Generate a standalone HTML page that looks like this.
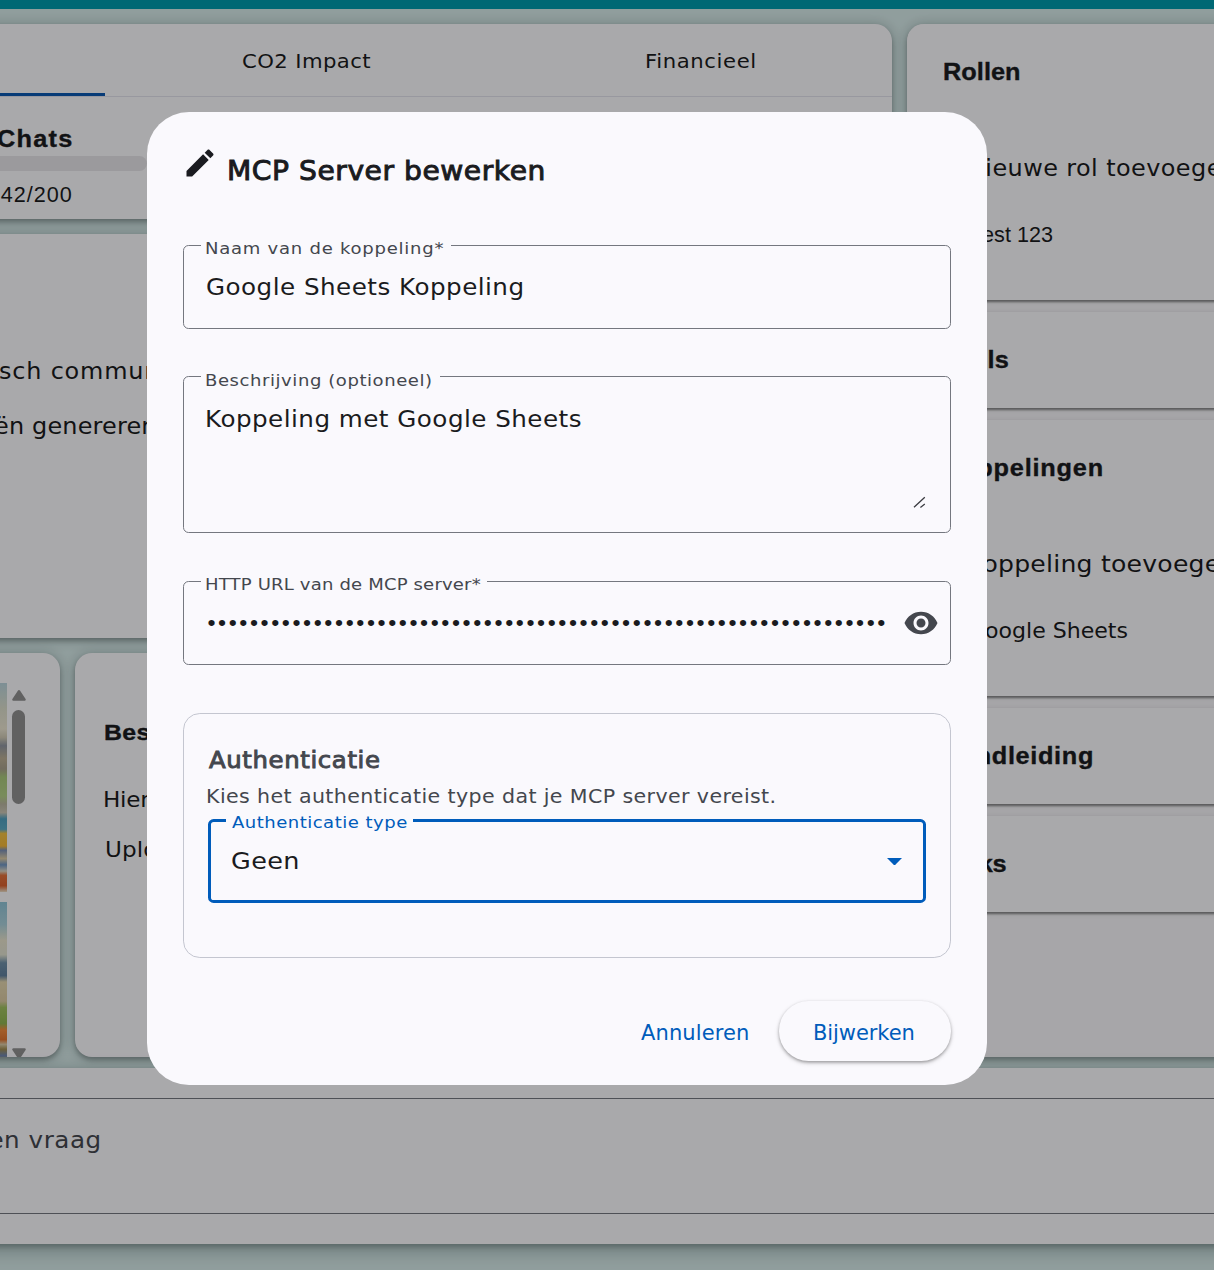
<!DOCTYPE html>
<html lang="nl">
<head>
<meta charset="utf-8">
<title>MCP Server bewerken</title>
<style>
  html, body { margin: 0; padding: 0; }
  body {
    width: 1214px; height: 1270px; overflow: hidden; position: relative;
    font-family: "DejaVu Sans", "Liberation Sans", sans-serif;
    color: #1a1b20;
    background: #d5e9e8;
  }
  /* every text run is positioned by its baseline: --b = baseline y, --x = left x */
  .t {
    position: absolute; white-space: nowrap; line-height: 1; margin: 0;
    left: calc(var(--x) * 1px);
    top: calc(var(--b) * 1px - 0.847em);
    font-weight: 400;
    --sx: 1.10; transform-origin: 0 50%; transform: scaleX(var(--sx));
  }
  .b { font-family: "Liberation Sans", "DejaVu Sans", sans-serif; font-weight: 700; --sx: 1.10; -webkit-text-stroke: 0.35px currentColor; }
  .q { font-family: "DejaVu Sans", "Liberation Sans", sans-serif; font-weight: 400; -webkit-text-stroke: 0.95px currentColor; --sx: 1.05; }

  /* ---------- page behind the dialog ---------- */
  #page { position: absolute; left: 0; top: 0; width: 1214px; height: 1270px; overflow: hidden; }
  .topbar { position: absolute; left: 0; top: 0; width: 1214px; height: 9px; background: #009aab; }
  .card {
    position: absolute; background: #faf9fd; border-radius: 17px;
    box-shadow: 0 1px 12px 2px rgba(0,30,30,0.18), 0 3px 5px rgba(0,0,0,0.26);
  }
  .tabs-line { position: absolute; left: 0; top: 95.8px; width: 892px; height: 1.4px; background: #e0e0ea; }
  .tab-ink { position: absolute; left: 0; top: 93px; width: 105px; height: 3.4px; background: #0b57b0; }
  .progress { position: absolute; left: -200px; top: 156px; width: 347px; height: 15px; border-radius: 8px; background: #e5e4e8; }

  .panel {
    position: absolute; left: 0; width: 400px; background: #faf9fd;
    box-shadow: 0 4px 2px -2px rgba(0,0,0,0.30), 0 2px 2px rgba(0,0,0,0.16), 0 1px 6px rgba(0,0,0,0.12);
  }

  .scroll-thumb { position: absolute; left: 12px; top: 710px; width: 13px; height: 94px; border-radius: 7px; background: #8f8f8f; }

  .bottom-bar { position: absolute; left: -20px; top: 1067.5px; width: 1260px; height: 176.3px; background: #faf9fd; box-shadow: 0 3px 5px rgba(0,15,15,0.20), 0 5px 16px 2px rgba(0,30,30,0.26); }
  .hline { position: absolute; left: 0; width: 1214px; height: 1.4px; background: #74777f; }

  /* ---------- backdrop ---------- */
  #backdrop { position: absolute; left: 0; top: 0; width: 1214px; height: 1270px; background: rgba(0,0,0,0.32); }

  /* ---------- dialog ---------- */
  #dialog {
    position: absolute; left: 147px; top: 112px; width: 840px; height: 972.5px;
    background: #faf9fd; border-radius: 42px;
  }
  .field { position: absolute; box-sizing: border-box; border: 1.4px solid #74777f; border-radius: 5.6px; }
  .notch { position: absolute; top: -3px; height: 6px; background: #faf9fd; }
  .lbl { font-size: 16.4px; color: #44474e; }
  .val { font-size: 22.4px; color: #1a1b20; }
</style>
</head>
<body>

<div id="page">
  <div class="topbar"></div>

  <!-- tabs + usage card -->
  <div class="card" style="left:-300px; top:24px; width:1192px; height:195px;"></div>
  <div class="tabs-line"></div>
  <div class="tab-ink"></div>
  <span class="t" id="tab2" style="--sx:1.05; --x:242.0; --b:68.4; font-size:20.2px; letter-spacing:0.37px;">CO2 Impact</span>
  <span class="t" id="tab3" style="--sx:1.05; --x:645.1; --b:68.4; font-size:20.2px; letter-spacing:0.56px;">Financieel</span>
  <span class="t b" id="chats" style="--x:-3.4; --b:147.2; font-size:23px; letter-spacing:1.14px;">Chats</span>
  <div class="progress"></div>
  <span class="t" id="usage" style="--sx:1; font-family:'Liberation Sans',sans-serif; --x:0.7; --b:202.2; font-size:21.6px; letter-spacing:1.01px;">42/200</span>

  <!-- description card -->
  <div class="card" style="left:-300px; top:234px; width:1192px; height:404px;"></div>
  <span class="t" id="desc1" style="--sx:1.05; --x:-1.2; --b:379.4; font-size:22.8px; letter-spacing:0.77px;">sch communiceren met de klant</span>
  <span class="t" id="desc2" style="--sx:1.05; --x:-5.8; --b:434.6; font-size:22.8px; letter-spacing:0.17px;">ën genereren op basis van tekst</span>

  <!-- image list card -->
  <div class="card" style="left:-300px; top:653px; width:360px; height:404px; overflow:hidden;">
    <div id="img1" style="position:absolute; left:293px; top:30px; width:14px; height:209px; background: linear-gradient(to bottom, #b9d3dc 0%, #d9dccb 12%, #e9e3cf 22%, #cfc9b4 26%, #8f95a0 30%, #b9ad93 36%, #a89f8c 41%, #a9c77c 45%, #b3cf86 54%, #b8b49f 58%, #c9c4b4 62%, #4f9fbf 65%, #5aa9c4 70%, #f0c040 72%, #f2b638 78%, #7b8fb5 80%, #d9c9a4 84%, #6f95c4 87%, #d8d2c0 90%, #e0703a 92%, #d9602f 97%, #e8dcc4 100%);"></div>
    <div id="img2" style="position:absolute; left:293px; top:249px; width:14px; height:160px; background: linear-gradient(to bottom, #8fc3d6 0%, #a9cfda 14%, #e6e2cc 24%, #dfe0cf 33%, #6f8fa8 38%, #5f7f9c 46%, #e2d4ae 50%, #d9c9a2 62%, #9fbf60 66%, #8fb350 76%, #f08a3c 80%, #e0742f 86%, #d9c9a4 89%, #a08c50 92%, #6f86b0 96%, #b09a5a 100%);"></div>
  </div>
  <svg class="arrow-up-svg" style="position:absolute; left:10.5px; top:688.5px;" width="16" height="13" viewBox="0 0 16 13" aria-hidden="true"><path d="M8 2.2 L13.6 10.6 L2.4 10.6 Z" fill="#8f8f8f" stroke="#8f8f8f" stroke-width="2.4" stroke-linejoin="round"/></svg>
  <div class="scroll-thumb"></div>
  <svg class="arrow-down-svg" style="position:absolute; left:10.5px; top:1046.5px;" width="16" height="10.5" viewBox="0 0 16 10.5" aria-hidden="true"><path d="M2.4 2.4 L13.6 2.4 L8 10.8 Z" fill="#8f8f8f" stroke="#8f8f8f" stroke-width="2.4" stroke-linejoin="round"/></svg>

  <!-- files card -->
  <div class="card" style="left:75px; top:653px; width:817px; height:404px;"></div>
  <span class="t b" id="bes" style="--x:103.9; --b:741.2; font-size:22.6px; letter-spacing:0.38px;">Bestanden</span>
  <span class="t" id="hier" style="--sx:1.05; --x:103.3; --b:807.2; font-size:22px; letter-spacing:-0.24px;">Hier kun je bestanden toevoegen</span>
  <span class="t" id="uplo" style="--sx:1.05; --x:104.5; --b:857.3; font-size:22px; letter-spacing:0.07px;">Upload een bestand</span>

  <!-- right accordion -->
  <div class="card" id="rightcard" style="left:907px; top:24px; width:400px; height:1033px; background:#f6f5f9; overflow:hidden;">
    <div class="panel" style="top:0px; height:276px;"></div>
    <div class="panel" style="top:287.5px; height:96.5px;"></div>
    <div class="panel" style="top:395.5px; height:276.5px;"></div>
    <div class="panel" style="top:683.5px; height:96.5px;"></div>
    <div class="panel" style="top:791.5px; height:96.5px;"></div>
  </div>
  <span class="t b" id="rollen" style="--x:942.9; --b:80; font-size:23px; letter-spacing:0.04px;">Rollen</span>
  <span class="t" id="nieuw" style="--sx:1.05; --x:967.3; --b:176; font-size:22.8px; letter-spacing:0.40px;">Nieuwe rol toevoegen</span>
  <span class="t" id="test" style="--sx:1; font-family:'Liberation Sans',sans-serif; --x:971.2; --b:242; font-size:21.6px; letter-spacing:0.04px;">Test 123</span>

  <span class="t b" id="tools" style="--x:942.4; --b:368; font-size:23px; letter-spacing:0.29px;">Tools</span>

  <span class="t b" id="kopp" style="--x:941.5; --b:476; font-size:23px; letter-spacing:0.72px;">Koppelingen</span>
  <span class="t" id="kopnew" style="--x:966.5; --b:572; font-size:22.8px; letter-spacing:0.22px;">Koppeling toevoegen</span>
  <span class="t" id="gsheets" style="--sx:1.05; --x:967.9; --b:638.8; font-size:21px; letter-spacing:-0.01px;">Google Sheets</span>

  <span class="t b" id="hand" style="--x:942.4; --b:764; font-size:23px; letter-spacing:0.60px;">Handleiding</span>

  <span class="t b" id="links" style="--x:942.4; --b:872; font-size:23px; letter-spacing:-0.37px;">Links</span>


  <!-- chat input -->
  <div class="bottom-bar"></div>
  <div class="hline" style="top:1097.5px;"></div>
  <div class="hline" style="top:1212.8px;"></div>
  <span class="t" id="vraag" style="--x:-85.5; --b:1147.5; font-size:22.4px; color:#44474e; letter-spacing:0.48px;">Stel een vraag</span>
</div>

<div id="backdrop"></div>

<div id="dialog" role="dialog">
  <div id="dlg-inner" style="position:absolute; left:-147px; top:-112px; width:1214px; height:1270px;">
    <!-- title -->
    <svg id="ic-edit" style="position:absolute; left:182.4px; top:144.5px;" width="36" height="36" viewBox="0 0 24 24" fill="#1a1b20" aria-hidden="true"><path d="M3 17.25V21h3.75L17.81 9.94l-3.75-3.75L3 17.25zM20.71 7.04c.39-.39.39-1.02 0-1.41l-2.34-2.34c-.39-.39-1.02-.39-1.41 0l-1.83 1.83 3.75 3.75 1.83-1.83z"/></svg>
    <h2 class="t q" id="title" style="--x:227.4; --b:180.4; font-size:26.8px; letter-spacing:0.52px;">MCP Server bewerken</h2>

    <!-- field 1 -->
    <div class="field" style="left:183px; top:244.6px; width:768.4px; height:84.2px;">
      <div class="notch" style="left:16.6px; width:250.2px;"></div>
    </div>
    <label class="t lbl" id="l1" style="--x:204.9; --b:254.8; letter-spacing:0.68px;">Naam van de koppeling*</label>
    <span class="t val" id="v1" style="--x:205.5; --b:294.6; letter-spacing:0.42px;">Google Sheets Koppeling</span>

    <!-- field 2 -->
    <div class="field" style="left:183px; top:376.4px; width:768.4px; height:156.6px;">
      <div class="notch" style="left:16.6px; width:239.2px;"></div>
    </div>
    <label class="t lbl" id="l2" style="--x:204.9; --b:386.4; letter-spacing:0.51px;">Beschrijving (optioneel)</label>
    <span class="t val" id="v2" style="--x:204.5; --b:427.2; letter-spacing:0.42px;">Koppeling met Google Sheets</span>
    <svg id="ic-resize" style="position:absolute; left:913px; top:496px;" width="13" height="13" viewBox="0 0 13 13" fill="none" stroke="#3a3b40" stroke-width="1.3" aria-hidden="true"><path d="M1 11.3 L11.8 1.2 M7.4 11.5 L11.8 8.1"/></svg>

    <!-- field 3 -->
    <div class="field" style="left:183px; top:580.8px; width:768.4px; height:84.2px;">
      <div class="notch" style="left:16.6px; width:286.1px;"></div>
    </div>
    <label class="t lbl" id="l3" style="--x:204.9; --b:590.4; letter-spacing:0.15px;">HTTP URL van de MCP server*</label>
    <span class="t" id="dots" style="--sx:1; --x:207.4; --b:630.6; font-family:'Liberation Sans',sans-serif; font-size:22.9px; letter-spacing:2.62px; color:#1a1b20;">••••••••••••••••••••••••••••••••••••••••••••••••••••••••••••••••</span>
    <svg id="ic-eye" style="position:absolute; left:902.6px; top:604.8px;" width="36" height="36" viewBox="0 0 24 24" fill="#44474e" aria-hidden="true"><path d="M12 4.5C7 4.5 2.73 7.61 1 12c1.73 4.39 6 7.5 11 7.5s9.27-3.11 11-7.5c-1.73-4.39-6-7.5-11-7.5zM12 17c-2.76 0-5-2.24-5-5s2.24-5 5-5 5 2.24 5 5-2.24 5-5 5zm0-8c-1.660 0-3 1.340-3 3s1.340 3 3 3 3-1.340 3-3-1.340-3-3-3z"/></svg>

    <!-- authentication card -->
    <div id="auth" style="position:absolute; box-sizing:border-box; left:183px; top:712.6px; width:768.4px; height:245.4px; border:1.4px solid #c4c6d0; border-radius:16.8px;"></div>
    <h3 class="t q" id="authh" style="--x:208.8; --b:767.8; font-size:23.2px; letter-spacing:0.60px; color:#44474e;">Authenticatie</h3>
    <p class="t" id="authp" style="--sx:1.05; --x:206.0; --b:803.2; font-size:19.6px; color:#44474e; letter-spacing:0.37px;">Kies het authenticatie type dat je MCP server vereist.</p>
    <div class="field" id="select" style="left:208px; top:819px; width:718px; height:84px; border:3px solid #005cbb;">
      <div class="notch" style="left:14.9px; width:187.6px; top:-4px; height:8px;"></div>
    </div>
    <label class="t lbl" id="l4" style="--x:231.9; --b:828.8; color:#005cbb; letter-spacing:0.44px;">Authenticatie type</label>
    <span class="t val" id="v4" style="--sx:1.14; --x:230.9; --b:868.5; letter-spacing:0.33px;">Geen</span>
    <svg id="ic-arrow" style="position:absolute; left:886.5px; top:857.7px;" width="15" height="7.7" viewBox="0 0 10 5" fill="#005cbb" aria-hidden="true"><path d="M0 0l5 5 5-5z"/></svg>

    <!-- actions -->
    <button class="t" id="cancel" style="--sx:1.03; --x:640.9; --b:1040.2; font-size:20.4px; color:#005cbb; background:none; border:0; padding:0; font-family:inherit; letter-spacing:0.10px;">Annuleren</button>
    <div id="okbtn" style="position:absolute; left:779px; top:1001.4px; width:172.3px; height:59.2px; border-radius:29.6px; background:#faf9fd; box-shadow:0 1.5px 3px rgba(0,0,0,0.30), 0 2px 4px 1px rgba(0,0,0,0.10);"></div>
    <button class="t" id="ok" style="--sx:1.03; --x:813.3; --b:1040.2; font-size:20.4px; color:#005cbb; background:none; border:0; padding:0; font-family:inherit; letter-spacing:-0.08px;">Bijwerken</button>
  </div>
</div>

</body>
</html>
